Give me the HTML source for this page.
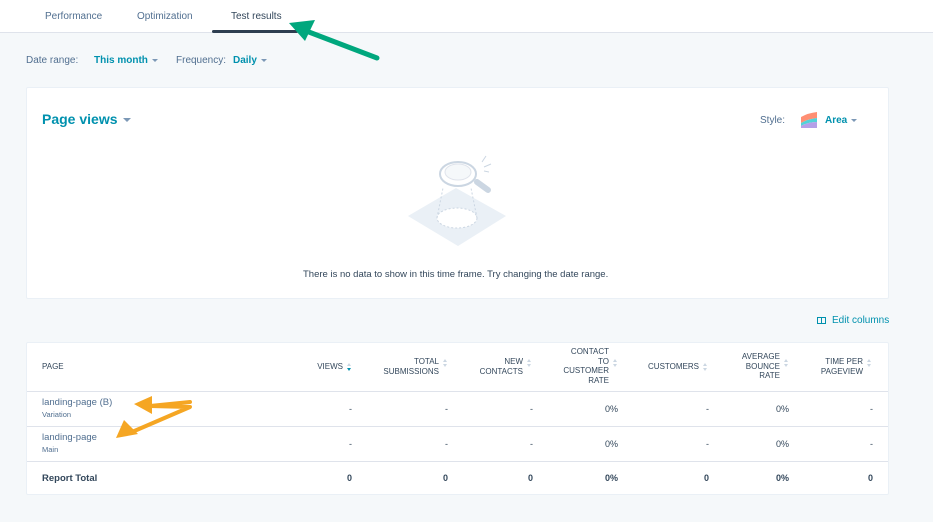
<!DOCTYPE html>
<html><head><meta charset="utf-8"><style>
*{margin:0;padding:0;box-sizing:border-box}
body{width:933px;height:522px;background:#f5f8fa;font-family:"Liberation Sans",sans-serif;color:#33475b;position:relative;overflow:hidden}
.a{position:absolute;white-space:nowrap}
.top{position:absolute;left:0;top:0;width:933px;height:33px;background:#fff;border-bottom:1px solid #dfe3eb}
.tab{font-size:10px;color:#516f90;top:11px}
.lbl{font-size:10px;color:#516f90}
.lnk{font-size:10px;color:#0091ae;font-weight:bold}
.car{display:inline-block;width:0;height:0;border-left:3px solid transparent;border-right:3px solid transparent;border-top:3px solid #7c98b6;vertical-align:middle;margin-left:4px}
.card{position:absolute;background:#fff;border:1px solid #eaf0f6;border-radius:2px}
.th{font-size:8px;color:#33475b;text-align:right;line-height:9.5px}
.sort{position:absolute;width:5px}
.sort:before,.sort:after{content:"";position:absolute;left:0;border-left:2.5px solid transparent;border-right:2.5px solid transparent}
.sort:before{top:0;border-bottom:3px solid #cbd6e2}
.sort:after{top:5px;border-top:3px solid #cbd6e2}
.sort.on:after{border-top-color:#0091ae}
.td{font-size:9px;color:#33475b;text-align:right;width:60px}
.line{position:absolute;left:27px;width:861px;height:1px;background:#dfe3eb}
</style></head><body>
<div class="top"></div>
<div class="a tab" style="left:45px">Performance</div>
<div class="a tab" style="left:137px">Optimization</div>
<div class="a tab" style="left:231px;color:#33475b">Test results</div>
<div class="a" style="left:212px;top:30px;width:86px;height:3px;background:#2d3e50;border-radius:2px"></div>
<svg class="a" style="left:285px;top:15px" width="100" height="50"><path d="M92 43 L16 14" stroke="#00a77d" stroke-width="5" stroke-linecap="round"/><path d="M4 8 L30 5 L20 26 Z" fill="#00a77d"/></svg>

<div class="a lbl" style="left:26px;top:55px">Date range:</div>
<div class="a lnk" style="left:94px;top:55px">This month<span class="car"></span></div>
<div class="a lbl" style="left:176px;top:55px">Frequency:</div>
<div class="a lnk" style="left:233px;top:55px">Daily<span class="car"></span></div>

<div class="card" style="left:26px;top:87px;width:863px;height:212px"></div>
<div class="a" style="left:42px;top:111px;font-size:14px;font-weight:bold;color:#0091ae">Page views<span class="car" style="border-width:4px 4px 0;margin-left:5px"></span></div>
<div class="a lbl" style="left:760px;top:115px">Style:</div>
<svg class="a" style="left:800px;top:111px" width="18" height="18"><path d="M1 6 Q8 2 17 1 L17 7 Q8 8 1 12Z" fill="#ff8f73"/><path d="M1 12 Q8 8 17 7 L17 11 Q8 11 1 15Z" fill="#51d3d9"/><path d="M1 15 Q8 11 17 11 L17 17 L1 17Z" fill="#b5a0e8"/></svg>
<div class="a lnk" style="left:825px;top:115px">Area<span class="car"></span></div>
<svg class="a" style="left:400px;top:150px" width="120" height="100">
<path d="M8 66 L56 38 L106 66 L58 96 Z" fill="#eaf0f6"/>
<ellipse cx="57" cy="68" rx="20" ry="10" fill="#fff" stroke="#cbd6e2" stroke-dasharray="2 2"/>
<path d="M37 68 L43 38 M77 68 L71 38" stroke="#cbd6e2" stroke-dasharray="2 2"/>
<path d="M77 32 L88 40" stroke="#cbd6e2" stroke-width="6" stroke-linecap="round"/>
<ellipse cx="58" cy="24" rx="18" ry="12" fill="#fff" stroke="#cbd6e2" stroke-width="2"/>
<ellipse cx="58" cy="22" rx="13" ry="8" fill="#f5f8fa" stroke="#dfe3eb"/>
<path d="M82 12 L86 6 M84 17 L91 14 M84 21 L89 22" stroke="#cbd6e2"/>
</svg>
<div class="a" style="left:303px;top:269px;font-size:9.5px;color:#33475b">There is no data to show in this time frame. Try changing the date range.</div>

<svg class="a" style="left:817px;top:316px" width="10" height="9"><rect x="0.5" y="1.5" width="8" height="6" fill="none" stroke="#0091ae"/><path d="M4.5 2 V7" stroke="#0091ae"/></svg>
<div class="a lnk" style="left:832px;top:315px;font-weight:normal;color:#0091ae">Edit columns</div>

<div class="card" style="left:26px;top:342px;width:863px;height:153px"></div>
<div class="line" style="top:391px"></div>
<div class="line" style="top:426px"></div>
<div class="line" style="top:461px"></div>
<div class="a th" style="left:42px;top:362px">PAGE</div>
<div class="a th" style="right:590px;top:362px">VIEWS</div><div class="sort on" style="left:347px;top:363px"></div>
<div class="a th" style="right:494px;top:357px">TOTAL<br>SUBMISSIONS</div><div class="sort" style="left:443px;top:359px"></div>
<div class="a th" style="right:410px;top:357px">NEW<br>CONTACTS</div><div class="sort" style="left:527px;top:359px"></div>
<div class="a th" style="right:324px;top:347px">CONTACT<br>TO<br>CUSTOMER<br>RATE</div><div class="sort" style="left:613px;top:359px"></div>
<div class="a th" style="right:234px;top:362px">CUSTOMERS</div><div class="sort" style="left:703px;top:363px"></div>
<div class="a th" style="right:153px;top:352px">AVERAGE<br>BOUNCE<br>RATE</div><div class="sort" style="left:784px;top:359px"></div>
<div class="a th" style="right:70px;top:357px">TIME PER<br>PAGEVIEW</div><div class="sort" style="left:867px;top:359px"></div>

<div class="a" style="left:42px;top:397px;font-size:9.5px;color:#516f90">landing-page (B)</div>
<div class="a" style="left:42px;top:410px;font-size:7.5px;color:#516f90">Variation</div>
<div class="a" style="left:42px;top:432px;font-size:9.5px;color:#516f90">landing-page</div>
<div class="a" style="left:42px;top:445px;font-size:7.5px;color:#516f90">Main</div>
<div class="a" style="left:42px;top:473px;font-size:9.5px;font-weight:bold">Report Total</div>

<div class="a td" style="left:292px;top:404px">-</div><div class="a td" style="left:388px;top:404px">-</div><div class="a td" style="left:473px;top:404px">-</div><div class="a td" style="left:558px;top:404px">0%</div><div class="a td" style="left:649px;top:404px">-</div><div class="a td" style="left:729px;top:404px">0%</div><div class="a td" style="left:813px;top:404px">-</div>
<div class="a td" style="left:292px;top:439px">-</div><div class="a td" style="left:388px;top:439px">-</div><div class="a td" style="left:473px;top:439px">-</div><div class="a td" style="left:558px;top:439px">0%</div><div class="a td" style="left:649px;top:439px">-</div><div class="a td" style="left:729px;top:439px">0%</div><div class="a td" style="left:813px;top:439px">-</div>
<div class="a td" style="left:292px;top:473px;font-weight:bold">0</div><div class="a td" style="left:388px;top:473px;font-weight:bold">0</div><div class="a td" style="left:473px;top:473px;font-weight:bold">0</div><div class="a td" style="left:558px;top:473px;font-weight:bold">0%</div><div class="a td" style="left:649px;top:473px;font-weight:bold">0</div><div class="a td" style="left:729px;top:473px;font-weight:bold">0%</div><div class="a td" style="left:813px;top:473px;font-weight:bold">0</div>

<svg class="a" style="left:110px;top:392px" width="90" height="50"><path d="M80 10 L40 14 L80 15 L22 40" stroke="#f5a623" stroke-width="4" fill="none" stroke-linecap="round" stroke-linejoin="round"/><path d="M24 12 L42 4 L42 22Z" fill="#f5a623"/><path d="M6 46 L14 28 L28 42Z" fill="#f5a623"/></svg>
</body></html>
